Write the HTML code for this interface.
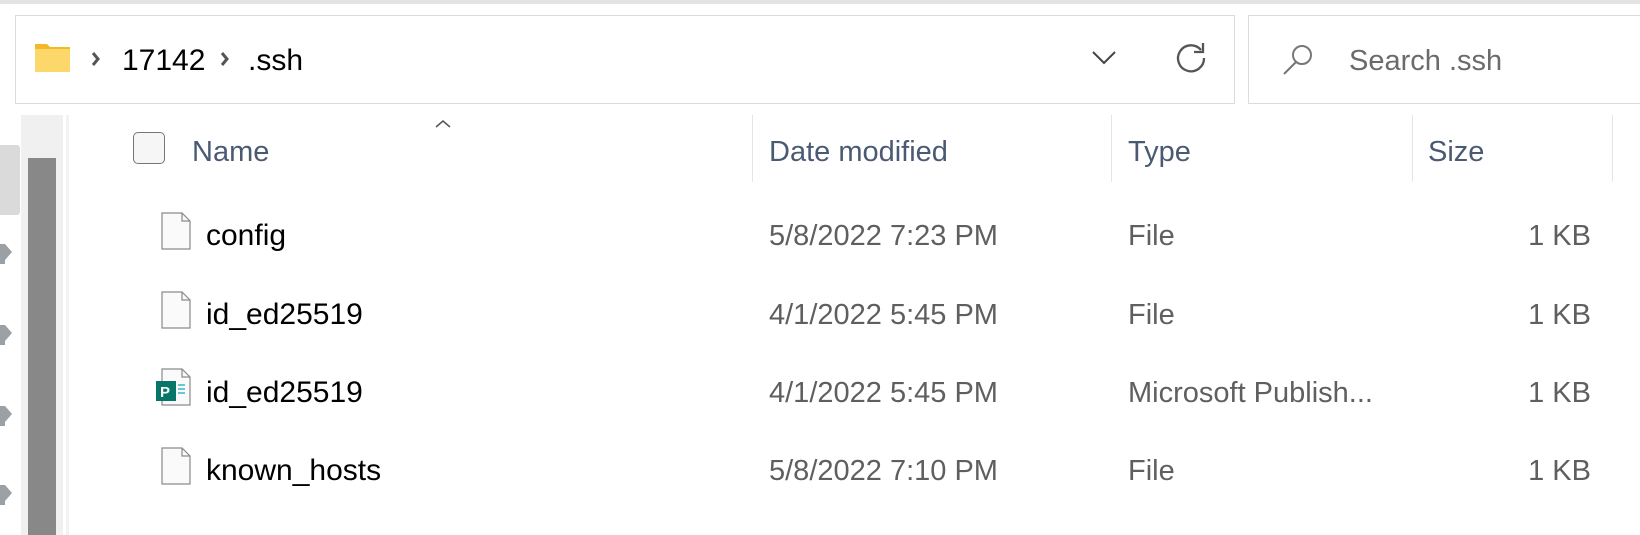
<!DOCTYPE html>
<html><head><meta charset="utf-8"><style>
*{margin:0;padding:0;box-sizing:border-box}
body{width:1640px;height:535px;overflow:hidden;background:#fff;font-family:"Liberation Sans",sans-serif;position:relative}
.a{position:absolute}
.t{position:absolute;font-size:29px;line-height:32px;white-space:nowrap}
.hd{color:#4b5a73}
.rw{color:#000;font-size:30px}
.g{color:#5f5f5f}
</style></head><body>
<div class="a" style="left:0;top:0;width:1640px;height:4px;background:#e3e3e3"></div>
<div class="a" style="left:15px;top:15px;width:1220px;height:89px;border:1px solid #dcdcdc"></div>
<div class="a" style="left:1248px;top:15px;width:410px;height:89px;border:1px solid #dcdcdc"></div>
<svg class="a" style="left:34px;top:43px" width="38" height="30" viewBox="0 0 38 30"><path d="M1 1h12l3 3h20v25H1z" fill="#f4b928"/><path d="M1 6h35v23H1z" fill="#fcd86a"/></svg>
<svg class="a" style="left:90px;top:50px" width="12" height="18"><path d="M3 3l5 6-5 6" stroke="#555" stroke-width="3" fill="none"/></svg>
<div class="t" style="left:122px;top:44px;font-size:30px;line-height:34px">17142</div>
<svg class="a" style="left:219px;top:50px" width="12" height="18"><path d="M3 3l5 6-5 6" stroke="#555" stroke-width="3" fill="none"/></svg>
<div class="t" style="left:248px;top:44px;font-size:30px;line-height:34px">.ssh</div>
<svg class="a" style="left:1090px;top:48px" width="30" height="20"><path d="M3 4l11 11 11-11" stroke="#444" stroke-width="2" fill="none"/></svg>
<svg class="a" style="left:1174px;top:40px" width="34" height="34" viewBox="0 0 34 34"><path d="M27 10A13 13 0 1 0 30 18" stroke="#555" stroke-width="2.3" fill="none"/><path d="M29 3v9h-9" stroke="#555" stroke-width="2.3" fill="none"/></svg>
<svg class="a" style="left:1282px;top:43px" width="32" height="32"><circle cx="20" cy="12" r="9" stroke="#777" stroke-width="2" fill="none"/><path d="M14 19L2 31" stroke="#777" stroke-width="2"/></svg>
<div class="t" style="left:1349px;top:44px;font-size:29px;line-height:34px;color:#6b6b6b">Search .ssh</div>
<div class="a" style="left:21px;top:115px;width:42px;height:420px;background:#f0f0f0"></div>
<div class="a" style="left:28px;top:158px;width:28px;height:377px;background:#888"></div>
<div class="a" style="left:0;top:145px;width:20px;height:70px;background:#dadada;border-radius:0 3px 3px 0"></div>
<div class="a" style="left:66px;top:115px;width:3px;height:420px;background:#f2f2f2"></div>
<svg class="a" style="left:0;top:244px" width="14" height="24"><path d="M0 0h5l7 8-7 8v4H0z" fill="#9aa0a4"/></svg>
<svg class="a" style="left:0;top:325px" width="14" height="24"><path d="M0 0h5l7 8-7 8v4H0z" fill="#9aa0a4"/></svg>
<svg class="a" style="left:0;top:406px" width="14" height="24"><path d="M0 0h5l7 8-7 8v4H0z" fill="#9aa0a4"/></svg>
<svg class="a" style="left:0;top:485px" width="14" height="24"><path d="M0 0h5l7 8-7 8v4H0z" fill="#9aa0a4"/></svg>
<div class="a" style="left:133px;top:132px;width:32px;height:32px;border:1.5px solid #777;border-radius:5px;background:#f6f6f6"></div>
<div class="t hd" style="left:192px;top:136px">Name</div>
<svg class="a" style="left:434px;top:119px" width="18" height="10"><path d="M2 8l7-6 7 6" stroke="#555" stroke-width="1.5" fill="none"/></svg>
<div class="a" style="left:752px;top:115px;width:1px;height:67px;background:#e5e5e5"></div>
<div class="a" style="left:1111px;top:115px;width:1px;height:67px;background:#e5e5e5"></div>
<div class="a" style="left:1412px;top:115px;width:1px;height:67px;background:#e5e5e5"></div>
<div class="a" style="left:1612px;top:115px;width:1px;height:67px;background:#e5e5e5"></div>
<div class="t hd" style="left:769px;top:136px">Date modified</div>
<div class="t hd" style="left:1128px;top:136px">Type</div>
<div class="t hd" style="left:1428px;top:136px">Size</div>
<svg width="0" height="0" style="position:absolute"><defs><g id="f"><path d="M1 1h20l8 8v28H1z" fill="#fafafa" stroke="#8a8a8a" stroke-width="1.2"/><path d="M21 1v8h8" fill="none" stroke="#8a8a8a" stroke-width="1.2"/></g></defs></svg>
<svg class="a" style="left:161px;top:212px" width="30" height="39"><use href="#f"/></svg>
<div class="t rw" style="left:206px;top:220px">config</div>
<div class="t g" style="left:769px;top:220px">5/8/2022 7:23 PM</div>
<div class="t g" style="left:1128px;top:220px">File</div>
<div class="t g" style="left:1480px;top:220px;width:111px;text-align:right">1 KB</div>
<svg class="a" style="left:161px;top:291px" width="30" height="39"><use href="#f"/></svg>
<div class="t rw" style="left:206px;top:299px">id_ed25519</div>
<div class="t g" style="left:769px;top:299px">4/1/2022 5:45 PM</div>
<div class="t g" style="left:1128px;top:299px">File</div>
<div class="t g" style="left:1480px;top:299px;width:111px;text-align:right">1 KB</div>
<svg class="a" style="left:156px;top:368px" width="36" height="39"><g transform="translate(5,0)"><use href="#f"/></g><rect x="0" y="13" width="20" height="20" fill="#077568"/><text x="4" y="29" font-family="Liberation Sans" font-weight="bold" font-size="15" fill="#fff">P</text><path d="M22 17h7M22 21h7M22 25h7" stroke="#36b6c4" stroke-width="1.6"/></svg>
<div class="t rw" style="left:206px;top:377px">id_ed25519</div>
<div class="t g" style="left:769px;top:377px">4/1/2022 5:45 PM</div>
<div class="t g" style="left:1128px;top:377px">Microsoft Publish...</div>
<div class="t g" style="left:1480px;top:377px;width:111px;text-align:right">1 KB</div>
<svg class="a" style="left:161px;top:447px" width="30" height="39"><use href="#f"/></svg>
<div class="t rw" style="left:206px;top:455px">known_hosts</div>
<div class="t g" style="left:769px;top:455px">5/8/2022 7:10 PM</div>
<div class="t g" style="left:1128px;top:455px">File</div>
<div class="t g" style="left:1480px;top:455px;width:111px;text-align:right">1 KB</div>
</body></html>
